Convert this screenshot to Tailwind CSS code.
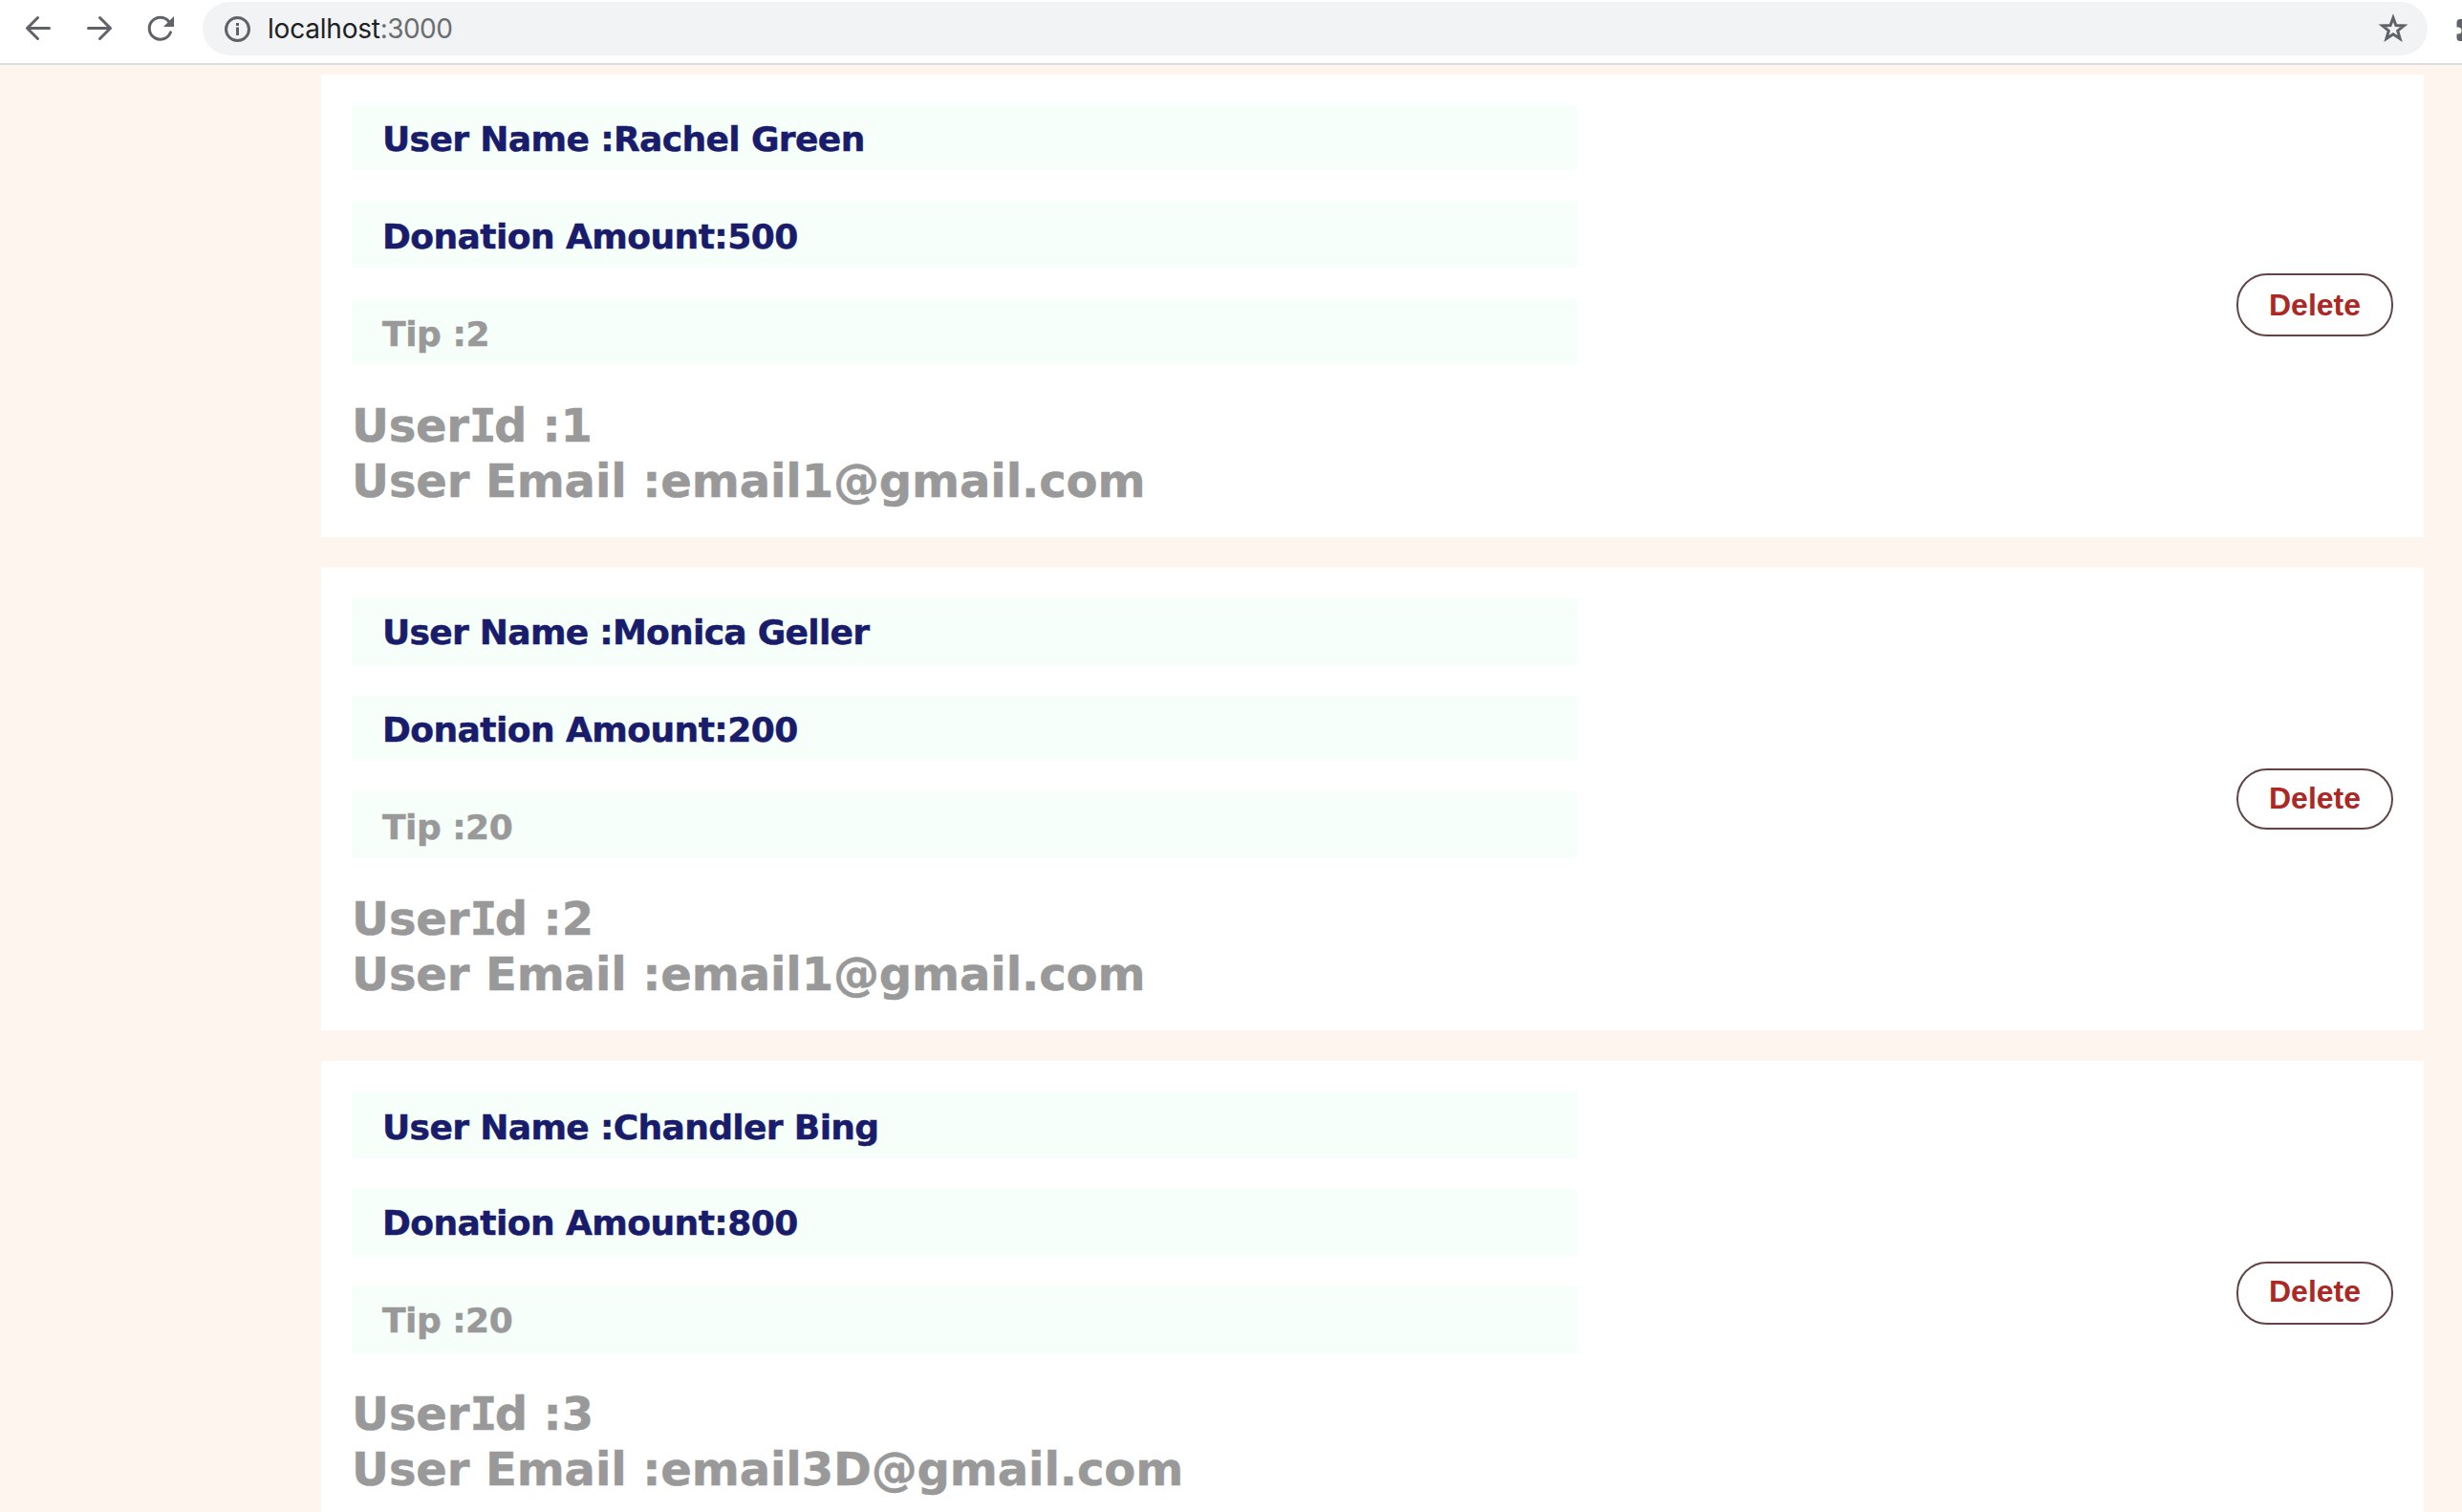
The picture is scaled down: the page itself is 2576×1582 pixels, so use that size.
<!DOCTYPE html>
<html lang="en">
<head>
<meta charset="utf-8">
<title>localhost:3000</title>
<script src="https://cdn.jsdelivr.net/npm/@tailwindcss/browser@4"></script>
</head>
<body class="h-screen overflow-hidden bg-[#fef5ef] font-['DejaVu_Sans',sans-serif] text-[#999999]">
  <!-- browser toolbar -->
  <header class="flex h-[68px] items-start border-b-2 border-[#dadce0] bg-white pt-[2px] text-[#5f6368]">
    <nav class="flex h-14 w-[212px] shrink-0 items-center gap-8 pl-6">
      <svg class="size-8" viewBox="0 0 32 32" fill="none" stroke="currentColor" stroke-width="3" stroke-linecap="round" stroke-linejoin="round"><path d="M27.5 15.5H4.5M15.5 4.5L4.5 15.5L15.5 26.5"/></svg>
      <svg class="size-8" viewBox="0 0 32 32" fill="none" stroke="currentColor" stroke-width="3" stroke-linecap="round" stroke-linejoin="round"><path d="M4.5 15.5H27.5M16.500 4.500L27.5 15.5L16.500 26.5"/></svg>
      <svg class="size-8" viewBox="0 0 32 32" fill="none" stroke="currentColor" stroke-width="3" stroke-linecap="round"><path d="M26.500 19.800A11.500 11.500 0 1 1 24.500 8.200"/><path d="M30 3V14H19Z" fill="currentColor" stroke="none"/></svg>
    </nav>
    <div class="flex h-14 w-[2328px] shrink-0 items-center rounded-full bg-[#f1f3f4] pr-5 pl-5">
      <svg class="size-8" viewBox="0 0 32 32" fill="none" stroke="currentColor" stroke-width="3"><circle cx="16.500" cy="16.500" r="12"/><path d="M16.500 14.500V23M16.500 10V13"/></svg>
      <p class="ml-4 grow font-[Inter,sans-serif] text-[28px] leading-10 tracking-[-0.2px] text-[#202124]">localhost<span class="tracking-[-0.6px] text-[#6b6d70]">:3000</span></p>
      <svg class="size-8" viewBox="0 0 32 32" fill="none" stroke="currentColor" stroke-width="3"><path d="M16 4.700L18.900 12.600L27.300 12.900L20.700 18.200L23.100 26.400L16 21.700L8.900 26.400L11.300 18.200L4.700 12.900L13.100 12.600Z"/></svg>
    </div>
    <svg class="mt-[18px] ml-[30px] h-6 w-1.5 shrink-0" viewBox="0 0 6 24" fill="currentColor"><path d="M6 0H4Q0.500 0 0.500 3.500V8.500H2A3.500 3.500 0 0 1 2 15.500H0.500V19.500Q0.500 23 4 23H6Z"/></svg>
  </header>

  <main class="flex flex-col gap-8 pt-[10px] pr-10 pl-[336px]">
    <article class="flex h-[484px] shrink-0 justify-between bg-white px-8 pt-8">
      <div class="w-[1282px] font-bold [-webkit-text-stroke:0.5px]">
        <div class="mb-8 h-[68px] bg-[#f6fffa] pt-[15px] pl-8 text-4xl leading-[42px] tracking-[-0.61px] text-[#191b6b]">User Name :Rachel Green</div>
        <div class="mb-8 h-[70px] bg-[#f6fffa] pt-[17px] pl-8 text-4xl leading-[42px] tracking-[-0.55px] text-[#191b6b]">Donation Amount:500</div>
        <div class="h-[70px] bg-[#f6fffa] pt-[17px] pl-8 text-4xl leading-[42px] tracking-[-0.4px]">Tip :2</div>
        <div class="mt-[34px] text-5xl leading-[58px] tracking-[-0.25px]">User<span class="mr-[-2.5px] font-['DejaVu_Sans_Mono',monospace]">I</span>d :1</div>
        <div class="text-5xl leading-[58px] tracking-[-0.1px]">User Email :email1@gmail.com</div>
      </div>
      <button class="mt-44 h-[66px] w-[164px] rounded-[32px] border-2 border-[#614545] font-['Liberation_Sans',Arial,sans-serif] text-[32px] leading-9 font-bold text-[#ac2824]">Delete</button>
    </article>

    <article class="flex h-[484px] shrink-0 justify-between bg-white px-8 pt-8">
      <div class="w-[1282px] font-bold [-webkit-text-stroke:0.5px]">
        <div class="mb-8 h-[70px] bg-[#f6fffa] pt-[15px] pl-8 text-4xl leading-[42px] tracking-[-0.7px] text-[#191b6b]">User Name :Monica Geller</div>
        <div class="mb-8 h-[68px] bg-[#f6fffa] pt-[15px] pl-8 text-4xl leading-[42px] tracking-[-0.55px] text-[#191b6b]">Donation Amount:200</div>
        <div class="h-[70px] bg-[#f6fffa] pt-[17px] pl-8 text-4xl leading-[42px] tracking-[-0.5px]">Tip :20</div>
        <div class="mt-[34px] text-5xl leading-[58px] tracking-[-0.1px]">User<span class="mr-[-2.5px] font-['DejaVu_Sans_Mono',monospace]">I</span>d :2</div>
        <div class="text-5xl leading-[58px] tracking-[-0.1px]">User Email :email1@gmail.com</div>
      </div>
      <button class="mt-[178px] h-16 w-[164px] rounded-[32px] border-2 border-[#614545] pb-0.5 font-['Liberation_Sans',Arial,sans-serif] text-[32px] leading-9 font-bold text-[#ac2824]">Delete</button>
    </article>

    <article class="flex h-[484px] shrink-0 justify-between bg-white px-8 pt-8">
      <div class="w-[1282px] font-bold [-webkit-text-stroke:0.5px]">
        <div class="mb-8 h-[70px] bg-[#f6fffa] pt-[17px] pl-8 text-4xl leading-[42px] tracking-[-0.63px] text-[#191b6b]">User Name :Chandler Bing</div>
        <div class="mb-8 h-[70px] bg-[#f6fffa] pt-[15px] pl-8 text-4xl leading-[42px] tracking-[-0.55px] text-[#191b6b]">Donation Amount:800</div>
        <div class="h-[70px] bg-[#f6fffa] pt-[15px] pl-8 text-4xl leading-[42px] tracking-[-0.5px]">Tip :20</div>
        <div class="mt-[34px] text-5xl leading-[58px] tracking-[-0.1px]">User<span class="mr-[-2.5px] font-['DejaVu_Sans_Mono',monospace]">I</span>d :3</div>
        <div class="text-5xl leading-[58px] tracking-[-0.1px]">User Email :email3D@gmail.com</div>
      </div>
      <button class="mt-[178px] h-[66px] w-[164px] rounded-[32px] border-2 border-[#614545] pb-1 font-['Liberation_Sans',Arial,sans-serif] text-[32px] leading-9 font-bold text-[#ac2824]">Delete</button>
    </article>
  </main>
</body>
</html>
